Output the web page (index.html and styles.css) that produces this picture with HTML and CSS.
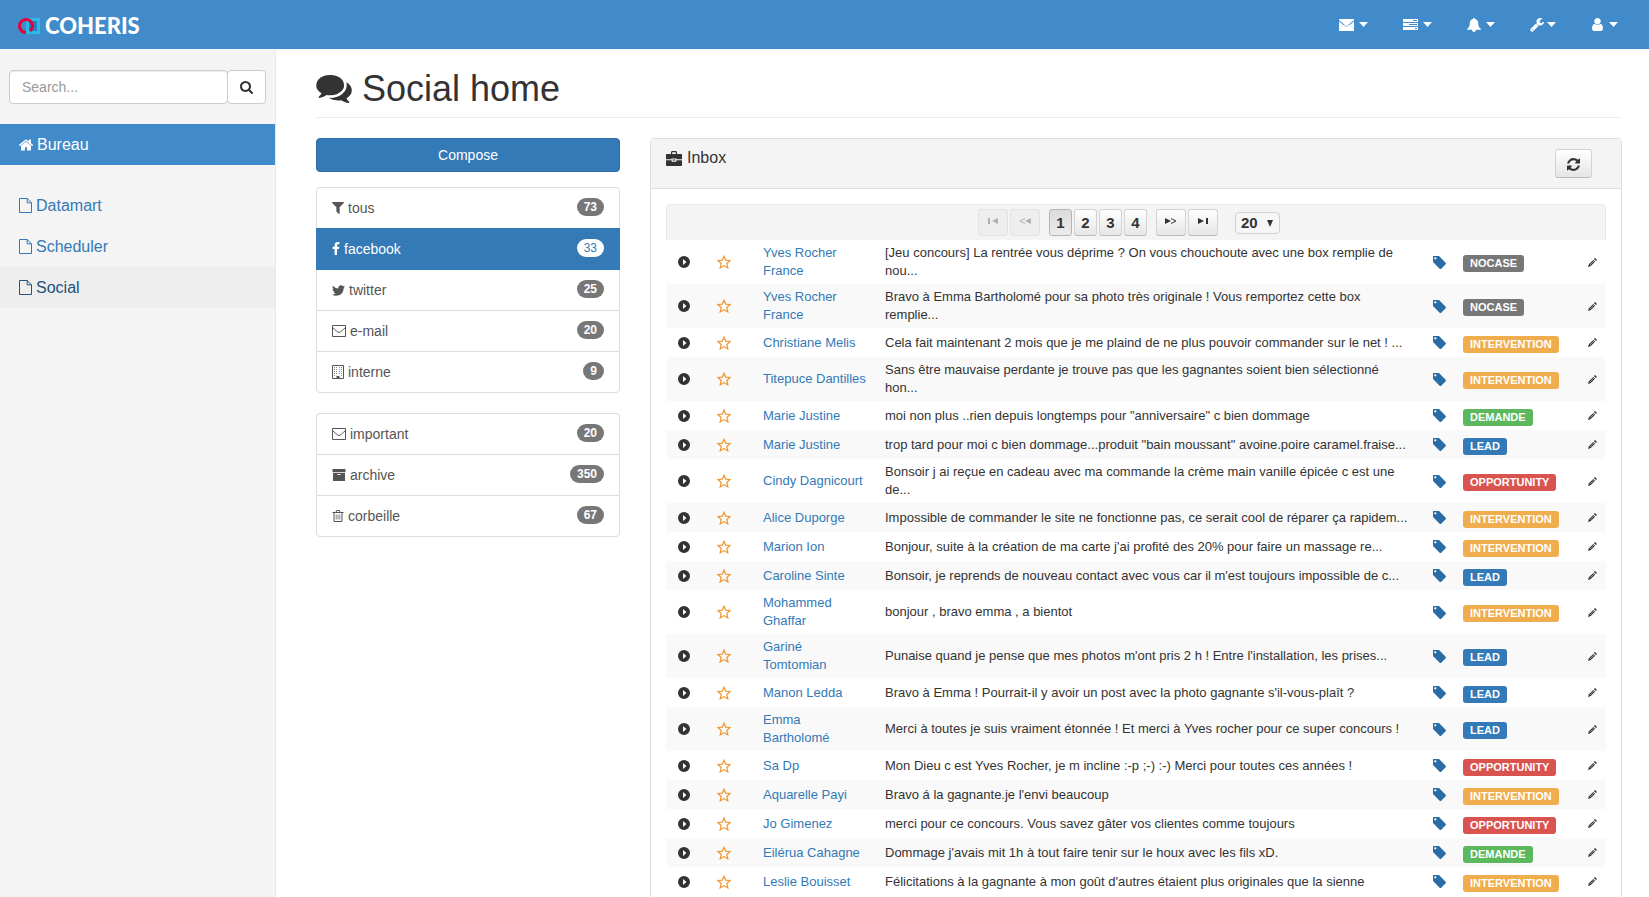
FILE: index.html
```html
<!DOCTYPE html>
<html lang="fr">
<head>
<meta charset="utf-8">
<title>Social home</title>
<link rel="stylesheet" href="styles.css">
</head>
<body>
<svg class="sprite" aria-hidden="true">
  <symbol id="envelope" viewBox="0 0 15 12"><path d="M0 0h15v1L7.500 7.500 0 1z"/><path d="M0 2.200l4.300 3.700L0 10.200zM15 2.200v8l-4.300-4.300zM5.100 6.600l2.400 2 2.400-2L15 11.300V12H0v-.7z"/><path d="M0 10l4.600-4.300L7.500 8l2.900-2.300L15 10v2H0z"/></symbol>
  <symbol id="server" viewBox="0 0 15 12"><path fill-rule="evenodd" d="M0 0h15v3H0zm10 1v1h4V1zM0 4h15v3H0zm6 1v1h8V5zM0 8h15v3H0zm12 1v1h2V9z"/></symbol>
  <symbol id="bell" viewBox="0 0 14 14"><path d="M7 0c.6 0 1 .4 1 1 2 .4 3.200 2 3.200 4 0 3.500 1 4.800 2.800 6v.8H9c-.2 1.300-.8 2.200-2 2.200s-1.800-.9-2-2.200H0V11c1.800-1.200 2.800-2.500 2.800-6C2.800 3 4 1.400 6 1c0-.6.4-1 1-1z"/></symbol>
  <symbol id="wrench" viewBox="64 128 1664 1664"><path d="M448 1472q0-26-19-45t-45-19-45 19-19 45 19 45 45 19 45-19 19-45zm644-420l-682 682q-37 37-90 37-52 0-91-37l-106-108q-38-36-38-90 0-53 38-91l681-681q39 98 114.500 173.500t173.500 114.500zm634-435q0 39-23 106-47 134-164.500 217.500t-258.500 83.500q-185 0-316.500-131.500t-131.500-316.500 131.500-316.500 316.500-131.500q58 0 121.500 16.500t107.500 46.500q16 11 16 28t-16 28l-293 169v224l193 107q5-3 79-48.500t135.500-81 70.500-35.500q15 0 23.500 10t8.500 25z"/></symbol>
  <symbol id="user" viewBox="192 128 1408 1536"><path d="M1536 1399q0 109-62.500 187t-150.500 78h-854q-88 0-150.500-78t-62.500-187q0-85 8.500-160.500t31.500-152 58.500-131 94-89 134.500-34.500q131 128 313 128t313-128q76 0 134.500 34.500t94 89 58.500 131 31.500 152 8.500 160.500zm-256-887q0 159-112.500 271.500t-271.500 112.500-271.500-112.500-112.500-271.500 112.500-271.500 271.500-112.500 271.500 112.500 112.500 271.500z"/></symbol>
  <symbol id="caret" viewBox="0 0 9 5"><path d="M0 0h9L4.500 5z"/></symbol>
  <symbol id="search" viewBox="64 128 1664 1664"><path d="M1216 832q0-185-131.500-316.500t-316.500-131.500-316.500 131.500-131.500 316.500 131.500 316.500 316.500 131.500 316.500-131.500 131.500-316.500zm512 832q0 52-38 90t-90 38q-54 0-90-38l-343-342q-179 124-399 124-143 0-273.500-55.500t-225-150-150-225-55.500-273.500 55.500-273.500 150-225 225-150 273.500-55.500 273.500 55.500 225 150 150 225 55.500 273.500q0 220-124 399l343 343q37 37 37 90z"/></symbol>
  <symbol id="home" viewBox="90 250 1612 1290"><path d="M1472 992v480q0 26-19 45t-45 19h-384v-384h-256v384h-384q-26 0-45-19t-19-45v-480q0-1 .5-3t.5-3l575-474 575 474q1 2 1 6zm223-69l-62 74q-8 9-21 11h-3q-13 0-21-7l-692-577-692 577q-12 8-24 7-13-2-21-11l-62-74q-8-10-7-23.500t11-21.500l719-599q32-26 76-26t76 26l244 204v-195q0-14 9-23t23-9h192q14 0 23 9t9 23v408l219 182q10 8 11 21.500t-7 23.500z"/></symbol>
  <symbol id="file" viewBox="0 0 13 15"><path fill="none" stroke="currentColor" d="M.5.500h7.700l4.300 4.300v9.700H.5zM8.200.500v4.300h4.300"/></symbol>
  <symbol id="comments" viewBox="0 256 1792 1408"><path d="M1408 768q0 139-94 257t-256.500 186.500-353.500 68.500q-86 0-176-16-124 88-278 128-36 9-86 16h-3q-11 0-20.500-8t-11.500-21q-1-3-1-6.500t.5-6.500 2-6l2.500-5t3.500-5.500 4-5 4.500-5 4-4.500q5-6 23-25t26-29.500 22.500-29 25-38.500 20.500-44q-124-72-195-177t-71-224q0-139 94-257t256.500-186.500 353.500-68.500 353.500 68.500 256.500 186.500 94 257zm384 256q0 120-71 224.500t-195 176.500q10 24 20.500 44t25 38.500 22.500 29 26 29.500 23 25q1 1 4 4.500t4.500 5 4 5 3.500 5.500l2.500 5t2 6 .5 6.500-1 6.500q-3 14-13 22t-22 7q-50-7-86-16-154-40-278-128-90 16-176 16-271 0-472-132 58 4 88 4 161 0 309-45t264-129q125-92 192-212t67-254q0-77-23-152 129 71 204 178t75 230z"/></symbol>
  <symbol id="filter" viewBox="190 250 1412 1420"><path d="M1595 295q17 41-14 70l-493 493v742q0 42-39 59-13 5-25 5-27 0-45-19l-256-256q-19-19-19-45v-486l-493-493q-31-29-14-70 17-39 59-39h1280q42 0 59 39z"/></symbol>
  <symbol id="facebook" viewBox="479 0 864 1664"><path d="M1343 12v264h-157q-86 0-116 36t-30 108v189h293l-39 296h-254v759h-306v-759h-255v-296h255v-218q0-186 104-288.500t277-102.500q147 0 228 12z"/></symbol>
  <symbol id="twitter" viewBox="108 256 1576 1280"><path d="M1684 408q-67 98-162 167 1 14 1 42 0 130-38 259.500t-115.500 248.500-184.500 210.500-258 146-323 54.500q-271 0-496-145 35 4 78 4 225 0 401-138-105-2-188-64.500t-114-159.500q33 5 61 5 43 0 85-11-112-23-185.500-111.500t-73.500-205.500v-4q68 38 146 41-66-44-105-115t-39-154q0-88 44-163 121 149 294.500 238.500t371.500 99.500q-8-38-8-74 0-134 94.500-228.500t228.500-94.500q140 0 236 102 109-21 205-78-37 115-142 178 93-10 186-50z"/></symbol>
  <symbol id="mail" viewBox="0 0 14 12"><path fill="none" stroke="currentColor" d="M.5.500h13v11H.5zM.5 2.500C3 4.500 5.500 7.500 7 7.500s4-3 6.500-5"/></symbol>
  <symbol id="building" viewBox="0 0 12 14"><path fill="none" stroke="currentColor" d="M.5.500h11v13H.5z"/><path opacity=".7" d="M2 2h1v1H2zm2 0h1v1H4zm3 0h1v1H7zm2 0h1v1H9zM2 4h1v1H2zm2 0h1v1H4zm3 0h1v1H7zm2 0h1v1H9zM2 6h1v1H2zm2 0h1v1H4zm3 0h1v1H7zm2 0h1v1H9zM2 8h1v1H2zm2 0h1v1H4zm3 0h1v1H7zm2 0h1v1H9zM2 10h1v1H2zm7 0h1v1H9z"/><path d="M4.500 11h3v3h-3z"/></symbol>
  <symbol id="archive" viewBox="0 0 13 12"><path fill-rule="evenodd" d="M0 0h13v3H0zM.5 3.700h12V12H.5zM5 5v1h3V5z"/></symbol>
  <symbol id="trash" viewBox="0 0 11 12"><path fill="none" stroke="currentColor" d="M0 2.500h11M3.500 2.500l.5-2h3l.5 2M1.500 2.500v9h8v-9"/><path fill="none" stroke="currentColor" stroke-width=".7" d="M3.700 4.500v5M5.500 4.500v5M7.300 4.500v5"/></symbol>
  <symbol id="briefcase" viewBox="0 0 16 15"><path fill-rule="evenodd" d="M5 3V1.500C5 .6 5.500 0 6.300 0h3.400c.8 0 1.300.6 1.300 1.500V3h4c.6 0 1 .4 1 1v4.200h-5.500V7.500h-5v.7H0V4c0-.6.4-1 1-1zm1.200 0h3.600V1.200H6.200z"/><path d="M0 9.200h5.500c0 1 .4 1.600 1.200 1.600h2.600c.8 0 1.200-.6 1.200-1.600H16V14c0 .6-.4 1-1 1H1c-.6 0-1-.4-1-1zM6.700 8.400h2.600v1.200H6.700z"/></symbol>
  <symbol id="refresh" viewBox="128 128 1536 1536"><path d="M1639 1056q0 5-1 7-64 268-268 434.500t-478 166.500q-146 0-282.500-55t-243.500-157l-129 129q-19 19-45 19t-45-19-19-45v-448q0-26 19-45t45-19h448q26 0 45 19t19 45-19 45l-137 137q71 66 161 102t187 36q134 0 250-65t186-179q11-17 53-117 8-23 30-23h192q13 0 22.500 9.500t9.500 22.500zm25-800v448q0 26-19 45t-45 19h-448q-26 0-45-19t-19-45 19-45l138-138q-148-137-349-137-134 0-250 65t-186 179q-11 17-53 117-8 23-30 23h-199q-13 0-22.500-9.500t-9.500-22.500v-7q65-268 270-434.500t480-166.500q146 0 284 55.500t245 156.500l130-129q19-19 45-19t45 19 19 45z"/></symbol>
  <symbol id="first" viewBox="0 0 10 6"><path d="M0 0h2v6H0zM10 0v6L4 3z"/></symbol>
  <symbol id="prev" viewBox="0 0 12 6"><path d="M12 0v6L6 3z"/><path fill="none" stroke="currentColor" d="M6 .5L1 3l5 2.500"/></symbol>
  <symbol id="next" viewBox="0 0 12 6"><path d="M0 0v6l6-3z"/><path fill="none" stroke="currentColor" d="M6 .5L11 3 6 5.500"/></symbol>
  <symbol id="last" viewBox="0 0 10 6"><path d="M8 0h2v6H8zM0 0v6l6-3z"/></symbol>
  <symbol id="play" viewBox="0 0 12 12"><path fill-rule="evenodd" d="M6 0a6 6 0 1 1 0 12A6 6 0 0 1 6 0zM5 3v6l3.500-3z"/></symbol>
  <symbol id="star" viewBox="0 0 14 14"><path fill="none" stroke="currentColor" stroke-width="1.200" d="M7 1.200l1.700 3.900 4.400.4-3.300 3 1 4.400L7 10.600l-3.800 2.300 1-4.400-3.300-3 4.400-.4z"/></symbol>
  <symbol id="tag" viewBox="190 190 1456 1456"><path d="M576 448q0-53-37.500-90.500t-90.500-37.500-90.500 37.500-37.500 90.500 37.500 90.500 90.500 37.500 90.500-37.500 37.500-90.500zm1067 576q0 53-37 90l-491 492q-39 37-91 37-53 0-90-37l-715-716q-38-37-64.500-101t-26.500-117v-416q0-52 38-90t90-38h416q53 0 117 26.500t102 64.500l715 714q37 39 37 91z"/></symbol>
  <symbol id="pencil" viewBox="0 0 9 9"><path d="M7 0l2 2-1.100 1.100-2-2zM5.300 1.900l1.800 1.800-4.400 4.400L0 9l.9-2.700z"/><path fill="none" stroke="#fff" stroke-width=".5" d="M2 7L6 3"/></symbol>
</svg>

<header class="navbar">
  <a class="brand" href="#">
    <svg class="brand-mark" viewBox="0 0 24 16" aria-hidden="true">
      <path fill="#2780c4" d="M9 0h14v16H9z"/>
      <path fill="none" stroke="#2bb9e6" stroke-width="3" d="M10.500 1.500h11v13h-11z"/>
      <path fill="none" stroke="#e4003f" stroke-width="3" d="M9 14.500A6.500 6.500 0 1 1 13.200 13"/>
    </svg>
    <span>COHERIS</span>
  </a>
  <nav class="tools">
    <button aria-label="Messages"><svg class="i15x12"><use href="#envelope"/></svg><svg class="caret"><use href="#caret"/></svg></button>
    <button aria-label="Tasks"><svg class="i15x12"><use href="#server"/></svg><svg class="caret"><use href="#caret"/></svg></button>
    <button aria-label="Alerts"><svg class="i14"><use href="#bell"/></svg><svg class="caret"><use href="#caret"/></svg></button>
    <button class="tight" aria-label="Settings"><svg class="i14"><use href="#wrench"/></svg><svg class="caret"><use href="#caret"/></svg></button>
    <button aria-label="Account"><svg class="i13"><use href="#user"/></svg><svg class="caret"><use href="#caret"/></svg></button>
  </nav>
</header>

<div class="layout">
  <aside class="sidebar">
    <form class="search">
      <input type="text" placeholder="Search..." aria-label="Search">
      <button type="button" aria-label="Search"><svg class="i13"><use href="#search"/></svg></button>
    </form>
    <a class="side-link current" href="#"><svg class="home"><use href="#home"/></svg>Bureau</a>
    <nav class="side-nav">
      <a class="side-link" href="#"><svg class="file"><use href="#file"/></svg>Datamart</a>
      <a class="side-link" href="#"><svg class="file"><use href="#file"/></svg>Scheduler</a>
      <a class="side-link hover" href="#"><svg class="file"><use href="#file"/></svg>Social</a>
    </nav>
  </aside>

  <main class="content">
    <h1><svg class="comments"><use href="#comments"/></svg>Social home</h1>
    <div class="columns">
      <div class="folders">
        <button class="compose">Compose</button>
        <nav class="list">
          <a href="#"><svg class="i12x12"><use href="#filter"/></svg>tous<span class="badge">73</span></a>
          <a class="active" href="#"><svg class="fb"><use href="#facebook"/></svg>facebook<span class="badge">33</span></a>
          <a href="#"><svg class="i13x11"><use href="#twitter"/></svg>twitter<span class="badge">25</span></a>
          <a href="#"><svg class="i14x12"><use href="#mail"/></svg>e-mail<span class="badge">20</span></a>
          <a href="#"><svg class="i12x14"><use href="#building"/></svg>interne<span class="badge">9</span></a>
        </nav>
        <nav class="list">
          <a href="#"><svg class="i14x12"><use href="#mail"/></svg>important<span class="badge">20</span></a>
          <a href="#"><svg class="i14x12"><use href="#archive"/></svg>archive<span class="badge">350</span></a>
          <a href="#"><svg class="i12x12"><use href="#trash"/></svg>corbeille<span class="badge">67</span></a>
        </nav>
      </div>

      <section class="panel">
        <header class="panel-head">
          <h2><svg class="briefcase"><use href="#briefcase"/></svg>Inbox</h2>
          <button class="refresh" aria-label="Refresh"><svg class="i13"><use href="#refresh"/></svg></button>
        </header>
        <div class="panel-body">
          <div class="pager">
            <div class="group">
              <button class="wide" disabled aria-label="First"><svg class="i10x6"><use href="#first"/></svg></button>
              <button class="wide" disabled aria-label="Previous"><svg class="i12x6"><use href="#prev"/></svg></button>
            </div>
            <div class="group">
              <button class="on">1</button><button>2</button><button>3</button><button>4</button>
            </div>
            <div class="group">
              <button class="wide" aria-label="Next"><svg class="i12x6"><use href="#next"/></svg></button>
              <button class="wide" aria-label="Last"><svg class="i10x6"><use href="#last"/></svg></button>
            </div>
            <div class="size">
              <select aria-label="Rows per page"><option>20</option><option>50</option></select>
              <svg class="arrow" viewBox="0 0 6 7"><path d="M0 0h6L3 7z"/></svg>
            </div>
          </div>
          <table>
            <colgroup><col class="c-play"><col class="c-star"><col class="c-name"><col><col class="c-tag"><col class="c-label"><col class="c-edit"></colgroup>
            <tbody>
              <tr><td><svg class="play"><use href="#play"/></svg></td><td><svg class="star"><use href="#star"/></svg></td><td><a href="#">Yves Rocher France</a></td><td>[Jeu concours] La rentrée vous déprime ? On vous chouchoute avec une box remplie de nou...</td><td><svg class="tag"><use href="#tag"/></svg></td><td><span class="label nocase">NOCASE</span></td><td><svg class="pencil"><use href="#pencil"/></svg></td></tr>
              <tr><td><svg class="play"><use href="#play"/></svg></td><td><svg class="star"><use href="#star"/></svg></td><td><a href="#">Yves Rocher France</a></td><td>Bravo à Emma Bartholomé pour sa photo très originale ! Vous remportez cette box remplie...</td><td><svg class="tag"><use href="#tag"/></svg></td><td><span class="label nocase">NOCASE</span></td><td><svg class="pencil"><use href="#pencil"/></svg></td></tr>
              <tr><td><svg class="play"><use href="#play"/></svg></td><td><svg class="star"><use href="#star"/></svg></td><td><a href="#">Christiane Melis</a></td><td>Cela fait maintenant 2 mois que je me plaind de ne plus pouvoir commander sur le net ! ...</td><td><svg class="tag"><use href="#tag"/></svg></td><td><span class="label intervention">INTERVENTION</span></td><td><svg class="pencil"><use href="#pencil"/></svg></td></tr>
              <tr><td><svg class="play"><use href="#play"/></svg></td><td><svg class="star"><use href="#star"/></svg></td><td><a href="#">Titepuce Dantilles</a></td><td>Sans être mauvaise perdante je trouve pas que les gagnantes soient bien sélectionné hon...</td><td><svg class="tag"><use href="#tag"/></svg></td><td><span class="label intervention">INTERVENTION</span></td><td><svg class="pencil"><use href="#pencil"/></svg></td></tr>
              <tr><td><svg class="play"><use href="#play"/></svg></td><td><svg class="star"><use href="#star"/></svg></td><td><a href="#">Marie Justine</a></td><td>moi non plus ..rien depuis longtemps pour "anniversaire" c bien dommage</td><td><svg class="tag"><use href="#tag"/></svg></td><td><span class="label demande">DEMANDE</span></td><td><svg class="pencil"><use href="#pencil"/></svg></td></tr>
              <tr><td><svg class="play"><use href="#play"/></svg></td><td><svg class="star"><use href="#star"/></svg></td><td><a href="#">Marie Justine</a></td><td>trop tard pour moi c bien dommage...produit "bain moussant" avoine.poire caramel.fraise...</td><td><svg class="tag"><use href="#tag"/></svg></td><td><span class="label lead">LEAD</span></td><td><svg class="pencil"><use href="#pencil"/></svg></td></tr>
              <tr><td><svg class="play"><use href="#play"/></svg></td><td><svg class="star"><use href="#star"/></svg></td><td><a href="#">Cindy Dagnicourt</a></td><td>Bonsoir j ai reçue en cadeau avec ma commande la crème main vanille épicée c est une de...</td><td><svg class="tag"><use href="#tag"/></svg></td><td><span class="label opportunity">OPPORTUNITY</span></td><td><svg class="pencil"><use href="#pencil"/></svg></td></tr>
              <tr><td><svg class="play"><use href="#play"/></svg></td><td><svg class="star"><use href="#star"/></svg></td><td><a href="#">Alice Duporge</a></td><td>Impossible de commander le site ne fonctionne pas, ce serait cool de réparer ça rapidem...</td><td><svg class="tag"><use href="#tag"/></svg></td><td><span class="label intervention">INTERVENTION</span></td><td><svg class="pencil"><use href="#pencil"/></svg></td></tr>
              <tr><td><svg class="play"><use href="#play"/></svg></td><td><svg class="star"><use href="#star"/></svg></td><td><a href="#">Marion Ion</a></td><td>Bonjour, suite à la création de ma carte j'ai profité des 20% pour faire un massage re...</td><td><svg class="tag"><use href="#tag"/></svg></td><td><span class="label intervention">INTERVENTION</span></td><td><svg class="pencil"><use href="#pencil"/></svg></td></tr>
              <tr><td><svg class="play"><use href="#play"/></svg></td><td><svg class="star"><use href="#star"/></svg></td><td><a href="#">Caroline Sinte</a></td><td>Bonsoir, je reprends de nouveau contact avec vous car il m'est toujours impossible de c...</td><td><svg class="tag"><use href="#tag"/></svg></td><td><span class="label lead">LEAD</span></td><td><svg class="pencil"><use href="#pencil"/></svg></td></tr>
              <tr><td><svg class="play"><use href="#play"/></svg></td><td><svg class="star"><use href="#star"/></svg></td><td><a href="#">Mohammed Ghaffar</a></td><td>bonjour , bravo emma , a bientot</td><td><svg class="tag"><use href="#tag"/></svg></td><td><span class="label intervention">INTERVENTION</span></td><td><svg class="pencil"><use href="#pencil"/></svg></td></tr>
              <tr><td><svg class="play"><use href="#play"/></svg></td><td><svg class="star"><use href="#star"/></svg></td><td><a href="#">Gariné Tomtomian</a></td><td>Punaise quand je pense que mes photos m'ont pris 2 h ! Entre l'installation, les prises...</td><td><svg class="tag"><use href="#tag"/></svg></td><td><span class="label lead">LEAD</span></td><td><svg class="pencil"><use href="#pencil"/></svg></td></tr>
              <tr><td><svg class="play"><use href="#play"/></svg></td><td><svg class="star"><use href="#star"/></svg></td><td><a href="#">Manon Ledda</a></td><td>Bravo à Emma ! Pourrait-il y avoir un post avec la photo gagnante s'il-vous-plaît ?</td><td><svg class="tag"><use href="#tag"/></svg></td><td><span class="label lead">LEAD</span></td><td><svg class="pencil"><use href="#pencil"/></svg></td></tr>
              <tr><td><svg class="play"><use href="#play"/></svg></td><td><svg class="star"><use href="#star"/></svg></td><td><a href="#">Emma Bartholomé</a></td><td>Merci à toutes je suis vraiment étonnée ! Et merci à Yves rocher pour ce super concours !</td><td><svg class="tag"><use href="#tag"/></svg></td><td><span class="label lead">LEAD</span></td><td><svg class="pencil"><use href="#pencil"/></svg></td></tr>
              <tr><td><svg class="play"><use href="#play"/></svg></td><td><svg class="star"><use href="#star"/></svg></td><td><a href="#">Sa Dp</a></td><td>Mon Dieu c est Yves Rocher, je m incline :-p ;-) :-) Merci pour toutes ces années !</td><td><svg class="tag"><use href="#tag"/></svg></td><td><span class="label opportunity">OPPORTUNITY</span></td><td><svg class="pencil"><use href="#pencil"/></svg></td></tr>
              <tr><td><svg class="play"><use href="#play"/></svg></td><td><svg class="star"><use href="#star"/></svg></td><td><a href="#">Aquarelle Payi</a></td><td>Bravo á la gagnante.je l'envi beaucoup</td><td><svg class="tag"><use href="#tag"/></svg></td><td><span class="label intervention">INTERVENTION</span></td><td><svg class="pencil"><use href="#pencil"/></svg></td></tr>
              <tr><td><svg class="play"><use href="#play"/></svg></td><td><svg class="star"><use href="#star"/></svg></td><td><a href="#">Jo Gimenez</a></td><td>merci pour ce concours. Vous savez gâter vos clientes comme toujours</td><td><svg class="tag"><use href="#tag"/></svg></td><td><span class="label opportunity">OPPORTUNITY</span></td><td><svg class="pencil"><use href="#pencil"/></svg></td></tr>
              <tr><td><svg class="play"><use href="#play"/></svg></td><td><svg class="star"><use href="#star"/></svg></td><td><a href="#">Eilérua Cahagne</a></td><td>Dommage j'avais mit 1h à tout faire tenir sur le houx avec les fils xD.</td><td><svg class="tag"><use href="#tag"/></svg></td><td><span class="label demande">DEMANDE</span></td><td><svg class="pencil"><use href="#pencil"/></svg></td></tr>
              <tr><td><svg class="play"><use href="#play"/></svg></td><td><svg class="star"><use href="#star"/></svg></td><td><a href="#">Leslie Bouisset</a></td><td>Félicitations à la gagnante à mon goût d'autres étaient plus originales que la sienne</td><td><svg class="tag"><use href="#tag"/></svg></td><td><span class="label intervention">INTERVENTION</span></td><td><svg class="pencil"><use href="#pencil"/></svg></td></tr>
            </tbody>
          </table>
        </div>
      </section>
    </div>
  </main>
</div>
</body>
</html>
```
FILE: styles.css
```css
* { box-sizing: border-box; }
body {
  margin: 0;
  min-height: 100vh;
  display: flex;
  flex-direction: column;
  font: 14px/20px "Liberation Sans", Arial, sans-serif;
  color: #333;
  background: #fff;
}
a { color: #337ab7; text-decoration: none; }
button, input, select { font: inherit; color: inherit; margin: 0; }
svg { fill: currentColor; flex: none; }
.sprite { position: absolute; width: 0; height: 0; }

.i10x6 { width: 10px; height: 6px; }
.i12x6 { width: 12px; height: 6px; }
.i12x12 { width: 12px; height: 12px; }
.i12x14 { width: 12px; height: 14px; }
.i13 { width: 13px; height: 13px; }
.i13x11 { width: 13px; height: 11px; }
.i14 { width: 14px; height: 14px; }
.i14x12 { width: 14px; height: 12px; }
.i15x12 { width: 15px; height: 12px; }
.fb { width: 8px; height: 13px; }

/* Top bar */
.navbar {
  display: flex;
  align-items: center;
  justify-content: space-between;
  height: 50px;
  padding: 0 31px 0 17px;
  background: #428bca;
  border-bottom: 1px solid #fff;
}
.brand {
  display: flex;
  align-items: center;
  gap: 4px;
  padding-top: 3px;
  font: 900 22px/24px Lato, sans-serif;
  color: #fff;
}
.brand-mark { width: 24px; height: 16px; }
.tools { display: flex; gap: 35px; color: #fff; }
.tools button {
  display: flex;
  align-items: center;
  gap: 5px;
  height: 20px;
  padding: 0;
  border: 0;
  background: none;
}
.tools .tight { gap: 3px; }
.caret { width: 9px; height: 5px; }

.layout { flex: 1; display: flex; }

/* Sidebar */
.sidebar {
  flex: none;
  width: 276px;
  background: #f4f4f4;
  border-right: 1px solid #e9e9e9;
}
.search { display: flex; padding: 20px 9px; }
.search input {
  flex: 1;
  min-width: 0;
  height: 34px;
  padding: 6px 12px;
  border: 1px solid #ccc;
  border-radius: 4px;
  background: #fff;
  box-shadow: inset 0 1px 1px rgba(0, 0, 0, .075);
}
.search input::placeholder { color: #999; opacity: 1; }
.search button {
  display: flex;
  align-items: center;
  justify-content: center;
  width: 39px;
  margin-left: -1px;
  padding: 0;
  border: 1px solid #ccc;
  border-radius: 4px;
  background: #fff;
}
.side-link {
  display: flex;
  align-items: center;
  gap: 4px;
  height: 41px;
  padding-left: 19px;
  font-size: 16px;
}
.side-link.current { background: #428bca; color: #fff; }
.side-link.hover { background: #eee; color: #23527c; }
.side-nav { padding-top: 20px; }
.home { width: 14px; height: 12px; }
.file { width: 13px; height: 15px; }

/* Main column */
.content { flex: 1; min-width: 0; padding: 20px 27px 20px 40px; }
h1 {
  display: flex;
  align-items: center;
  gap: 10px;
  margin: 0 0 20px;
  padding-bottom: 9px;
  border-bottom: 1px solid #eee;
  font-size: 36px;
  font-weight: 400;
  line-height: 38px;
}
.comments { width: 36px; height: 28px; }
.columns {
  display: grid;
  grid-template-columns: calc((100% + 30px) / 4 - 30px) minmax(0, 1fr);
  gap: 30px;
  align-items: start;
}

.compose {
  display: block;
  width: 100%;
  height: 34px;
  margin-bottom: 15px;
  border: 1px solid #2e6da4;
  border-radius: 4px;
  background: #337ab7;
  color: #fff;
}
.list {
  margin-bottom: 20px;
  border: 1px solid #ddd;
  border-radius: 4px;
}
.list a {
  display: flex;
  align-items: center;
  gap: 4px;
  height: 41px;
  padding: 0 15px;
  border-bottom: 1px solid #ddd;
  color: #555;
}
.list a:last-child { height: 40px; border-bottom: 0; }
.list .active {
  margin: -1px -1px 0;
  height: 42px;
  padding: 0 16px;
  border-bottom-color: #337ab7;
  background: #337ab7;
  color: #fff;
}
.badge {
  margin: 0 0 2px auto;
  padding: 3px 7px;
  border-radius: 10px;
  background: #777;
  color: #fff;
  font-size: 12px;
  font-weight: 700;
  line-height: 12px;
}
.active .badge { background: #fff; color: #337ab7; font-weight: 400; }

/* Inbox panel */
.panel { border: 1px solid #ddd; border-radius: 4px; }
.panel-head {
  display: flex;
  justify-content: space-between;
  padding: 10px 29px 10px 15px;
  border-bottom: 1px solid #ddd;
  background: #f4f4f4;
}
.panel-head h2 {
  display: flex;
  align-items: center;
  gap: 5px;
  height: 18px;
  margin: 0;
  font-size: 16px;
  font-weight: 400;
}
.briefcase { width: 16px; height: 15px; }
.refresh, .pager button {
  display: flex;
  align-items: center;
  justify-content: center;
  padding: 0;
  border: 1px solid #d3d3d3;
  border-bottom-color: #bbb;
  border-radius: 3px;
  background: linear-gradient(#fff, #e6e6e6);
}
.refresh { width: 37px; height: 29px; padding-top: 2px; }
.panel-body { padding: 15px; }

.pager {
  display: flex;
  align-items: center;
  justify-content: center;
  gap: 9px;
  height: 36px;
  padding: 4px 14px 4px 0;
  border: 1px solid #e9e9e9;
  border-bottom: 0;
  border-radius: 4px 4px 0 0;
  background: #f4f4f4;
  font-size: 15px;
  font-weight: 700;
}
.group { display: flex; gap: 2px; }
.pager button { width: 23px; height: 27px; }
.pager .wide { width: 30px; padding-bottom: 4px; }
.pager button:disabled {
  border-color: #e3e3e3;
  background: #eee;
  color: #b0b0b0;
}
.pager .on {
  border-color: #b5b5b5;
  background: linear-gradient(#dcdcdc, #ebebeb);
}
.size { position: relative; margin-left: 8px; }
.size select {
  display: block;
  width: 45px;
  height: 22px;
  padding: 0 5px;
  border: 1px solid #d0d0d0;
  border-radius: 4px;
  background: #f6f6f6;
  appearance: none;
}
.arrow {
  position: absolute;
  right: 7px;
  top: 8px;
  width: 6px;
  height: 7px;
  pointer-events: none;
}

table {
  width: 100%;
  table-layout: fixed;
  border-collapse: collapse;
  font-size: 13px;
  line-height: 18px;
}
.c-play { width: 36px; }
.c-star { width: 44px; }
.c-name { width: 130px; }
.c-tag { width: 29px; }
.c-label { width: 124px; }
.c-edit { width: 28px; }
tr { height: 29px; }
tr:nth-child(even) { background: #f9f9f9; }
td { padding: 4px 0; text-align: center; }
td:nth-child(3), td:nth-child(4), td:nth-child(6) { padding: 4px 9px; text-align: left; }
td:nth-child(3) { padding-left: 17px; }
td:nth-child(4) { padding-right: 15px; }
td svg { display: block; margin: 0 auto; }
.play { width: 12px; height: 12px; }
.star { width: 14px; height: 14px; color: #f0962e; }
.tag { width: 13px; height: 13px; color: #2a6ca6; }
.pencil { width: 9px; height: 9px; }
.label {
  display: block;
  width: fit-content;
  margin-top: 3px;
  padding: 2px 7px 3px;
  border-radius: 3px;
  color: #fff;
  font-size: 11px;
  font-weight: 700;
  line-height: 12px;
}
.nocase { background: #777; }
.intervention { background: #f0ad4e; }
.demande { background: #5cb85c; }
.lead { background: #337ab7; }
.opportunity { background: #d9534f; }
```
